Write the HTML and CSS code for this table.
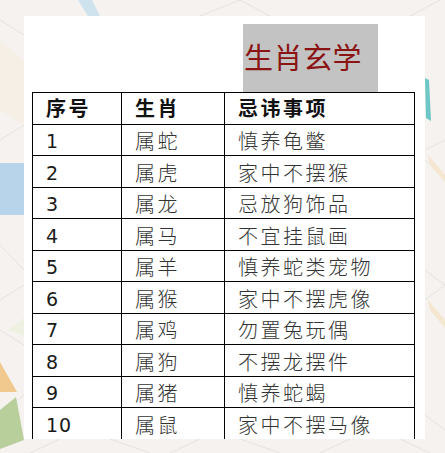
FILE: index.html
```html
<!DOCTYPE html>
<html lang="zh">
<head>
<meta charset="utf-8">
<link rel="stylesheet" href="styles.css">
</head>
<body>
<svg class="bg" width="445" height="453" viewBox="0 0 445 453" aria-hidden="true">
  <g stroke="#e6e2de" stroke-width="1" fill="none">
    <path d="M0 20 L40 45"/>
    <path d="M0 140 L24 125"/>
    <path d="M0 245 L24 270"/>
    <path d="M0 300 L24 285"/>
    <path d="M0 330 L24 345"/>
    <path d="M0 415 L24 395"/>
    <path d="M30 453 L60 439"/>
    <path d="M110 439 L150 453"/>
    <path d="M170 453 L200 439"/>
    <path d="M240 439 L280 453"/>
    <path d="M320 453 L350 439"/>
    <path d="M400 439 L430 453"/>
    <path d="M200 16 L240 0"/>
    <path d="M240 0 L270 16"/>
    <path d="M410 16 L440 0"/>
    <path d="M425 150 L445 140"/>
    <path d="M425 160 L445 175"/>
    <path d="M425 270 L445 285"/>
    <path d="M425 300 L445 285"/>
    <path d="M425 415 L445 430"/>
  </g>
  <path d="M0 40 L24 60 L24 125 L0 110 Z" fill="#f6efe6"/>
  <path d="M78 0 L92 0 L100 16 L88 16 Z" fill="#cfe3ef"/>
  <rect x="0" y="163" width="24" height="52" fill="#b8d4ea"/>
  <path d="M0 362 L17 392 L0 392 Z" fill="#f1c98e"/>
  <path d="M0 410 L16 397 L24 440 L0 449 Z" fill="#b8cf9c"/>
  <path d="M8 330 L24 318 L24 336 Z" fill="#eef0e2"/>
  <path d="M425 78 L429 80 L431 121 L426 118 Z" fill="#6dc7c6"/>
  <path d="M428 155 L445 175 L445 182 L430 165 Z" fill="#f5e6cf"/>
  <path d="M428 300 L445 320 L445 328 L430 310 Z" fill="#f5e6cf"/>
</svg>
<main class="card">
  <div class="title-row">
    <h1 class="title">生肖玄学</h1>
  </div>
  <table class="taboo">
    <colgroup>
      <col class="c-num">
      <col class="c-zodiac">
      <col class="c-item">
    </colgroup>
    <thead>
      <tr><th>序号</th><th>生肖</th><th>忌讳事项</th></tr>
    </thead>
    <tbody>
      <tr><td class="num">1</td><td>属蛇</td><td>慎养龟鳖</td></tr>
      <tr><td class="num">2</td><td>属虎</td><td>家中不摆猴</td></tr>
      <tr><td class="num">3</td><td>属龙</td><td>忌放狗饰品</td></tr>
      <tr><td class="num">4</td><td>属马</td><td>不宜挂鼠画</td></tr>
      <tr><td class="num">5</td><td>属羊</td><td>慎养蛇类宠物</td></tr>
      <tr><td class="num">6</td><td>属猴</td><td>家中不摆虎像</td></tr>
      <tr><td class="num">7</td><td>属鸡</td><td>勿置兔玩偶</td></tr>
      <tr><td class="num">8</td><td>属狗</td><td>不摆龙摆件</td></tr>
      <tr><td class="num">9</td><td>属猪</td><td>慎养蛇蝎</td></tr>
      <tr><td class="num">10</td><td>属鼠</td><td>家中不摆马像</td></tr>
    </tbody>
  </table>
</main>
</body>
</html>
```
FILE: styles.css
```css
html, body {
  margin: 0;
  padding: 0;
}
body {
  width: 445px;
  height: 453px;
  background: #f5f2ef;
  position: relative;
  overflow: hidden;
  font-family: "Noto Sans CJK SC", "Noto Sans", sans-serif;
}
.bg {
  position: absolute;
  left: 0;
  top: 0;
}
.card {
  position: relative;
  margin: 16px 0 0 24px;
  width: 401px;
  height: 423px;
  background: #ffffff;
  overflow: hidden;
}
.title-row {
  padding: 8px 0 0 219px;
}
.title {
  margin: 0;
  width: 135px;
  height: 68px;
  box-sizing: border-box;
  padding: 15px 0 0 1px;
  background: #c3c3c3;
  color: #8a1414;
  font-size: 29px;
  line-height: 34px;
  font-weight: 400;
  letter-spacing: 0.5px;
  white-space: nowrap;
}
.taboo {
  margin-left: 8px;
  width: 382px;
  table-layout: fixed;
  border-collapse: collapse;
}
.c-num { width: 89px; }
.c-zodiac { width: 103px; }
.c-item { width: 190px; }
.taboo th,
.taboo td {
  border: 1px solid #000;
  height: 31.5px;
  padding: 1px 0 0 13px;
  box-sizing: border-box;
  text-align: left;
  vertical-align: middle;
  font-size: 20px;
  line-height: 24px;
  letter-spacing: 2.5px;
  white-space: nowrap;
}
.taboo th {
  color: #111;
  font-weight: 700;
  padding-top: 0;
}
.taboo td {
  color: #333;
  font-weight: 300;
  padding-top: 3px;
}
.taboo td.num {
  font-family: "DejaVu Sans", sans-serif;
  font-weight: 400;
  font-size: 19px;
  color: #1a1a1a;
  letter-spacing: 1px;
}
```
